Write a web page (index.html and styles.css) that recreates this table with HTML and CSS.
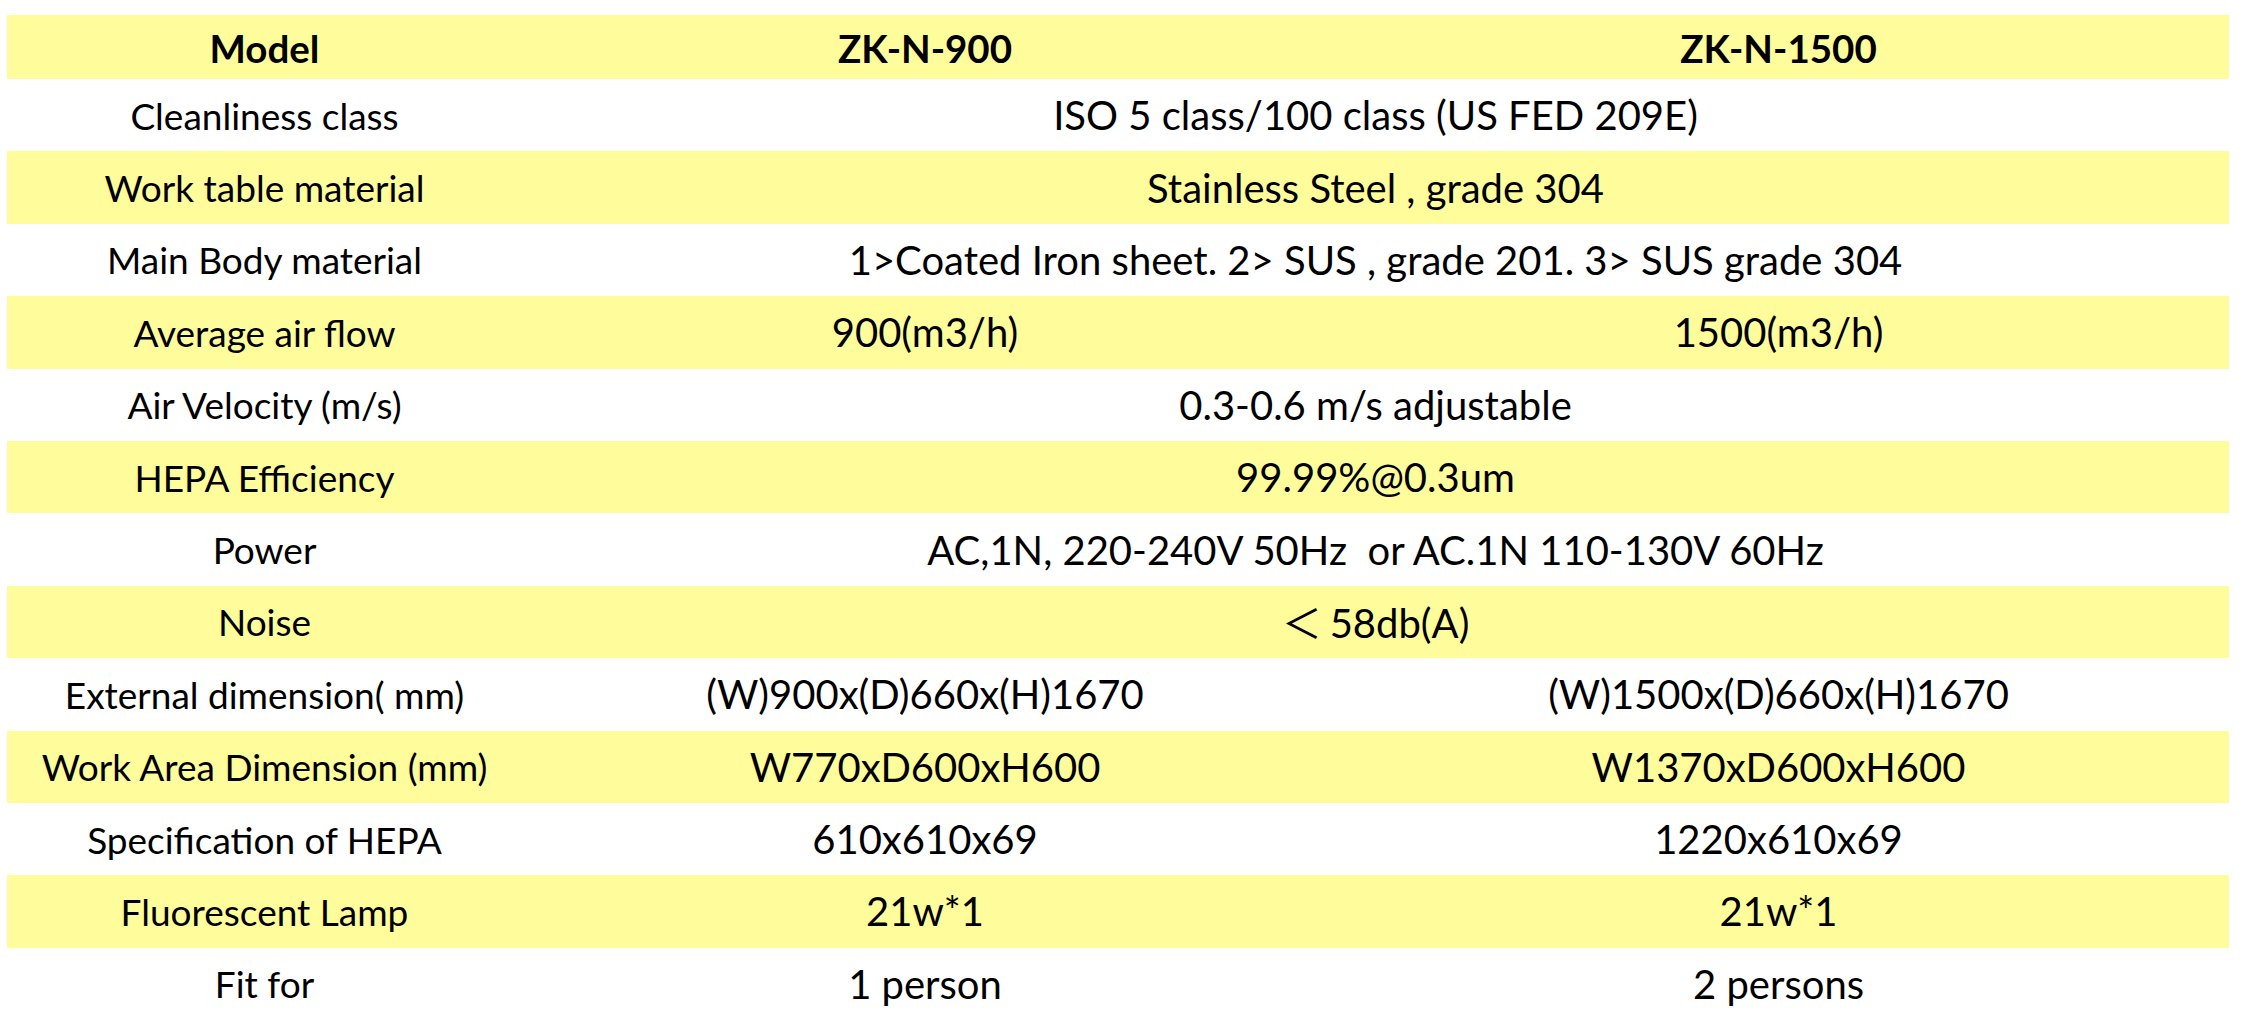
FILE: index.html
```html
<!DOCTYPE html>
<html lang="en">
<head>
<meta charset="utf-8">
<title>Spec table</title>
<link rel="stylesheet" href="styles.css">
</head>
<body>
<div class="spec">
  <div class="row head yellow"><div class="c">Model</div><div class="c">ZK-N-900</div><div class="c">ZK-N-1500</div></div>
  <div class="row"><div class="c">Cleanliness class</div><div class="c v span">ISO 5 class/100 class (US FED 209E)</div></div>
  <div class="row yellow"><div class="c">Work table material</div><div class="c v span">Stainless Steel , grade 304</div></div>
  <div class="row"><div class="c">Main Body material</div><div class="c v span">1&gt;Coated Iron sheet. 2&gt; SUS , grade 201. 3&gt; SUS grade 304</div></div>
  <div class="row yellow"><div class="c">Average air flow</div><div class="c v">900(m3/h)</div><div class="c v">1500(m3/h)</div></div>
  <div class="row"><div class="c">Air Velocity (m/s)</div><div class="c v span">0.3-0.6 m/s adjustable</div></div>
  <div class="row yellow"><div class="c">HEPA Efficiency</div><div class="c v span">99.99%@0.3um</div></div>
  <div class="row"><div class="c">Power</div><div class="c v span">AC,1N, 220-240V 50Hz&nbsp; or AC.1N 110-130V 60Hz</div></div>
  <div class="row yellow"><div class="c">Noise</div><div class="c v span"><span class="lt">＜</span>58db(A)</div></div>
  <div class="row"><div class="c">External dimension( mm)</div><div class="c v">(W)900x(D)660x(H)1670</div><div class="c v">(W)1500x(D)660x(H)1670</div></div>
  <div class="row yellow"><div class="c">Work Area Dimension (mm)</div><div class="c v">W770xD600xH600</div><div class="c v">W1370xD600xH600</div></div>
  <div class="row"><div class="c">Specification of HEPA</div><div class="c v">610x610x69</div><div class="c v">1220x610x69</div></div>
  <div class="row yellow"><div class="c">Fluorescent Lamp</div><div class="c v">21w*1</div><div class="c v">21w*1</div></div>
  <div class="row"><div class="c">Fit for</div><div class="c v">1 person</div><div class="c v">2 persons</div></div>
</div>
</body>
</html>
```
FILE: styles.css
```css
html, body {
  margin: 0;
  padding: 0;
  background: #ffffff;
}
body {
  font-family: Lato, "Open Sans", "Liberation Sans", sans-serif;
  color: #000000;
}
.spec {
  width: 2222px;
  margin: 15px 0 0 7px;
}
.row {
  display: grid;
  grid-template-columns: 515px 806px 901px;
  height: 72.4px;
  align-items: center;
}
.yellow {
  background: #fffc9b;
}
.c {
  text-align: center;
  font-size: 37px;
  line-height: 1;
  white-space: nowrap;
}
.c.v {
  font-size: 40px;
}
.c.span {
  grid-column: 2 / 4;
}
.row.head {
  height: 64px;
}
.row.head .c {
  font-weight: 700;
  font-size: 38.5px;
  padding-top: 2px;
}
.lt {
  font-family: "Noto Sans CJK SC", sans-serif;
  font-size: 40px;
  display: inline-block;
  width: 48px;
  text-align: left;
}
```
